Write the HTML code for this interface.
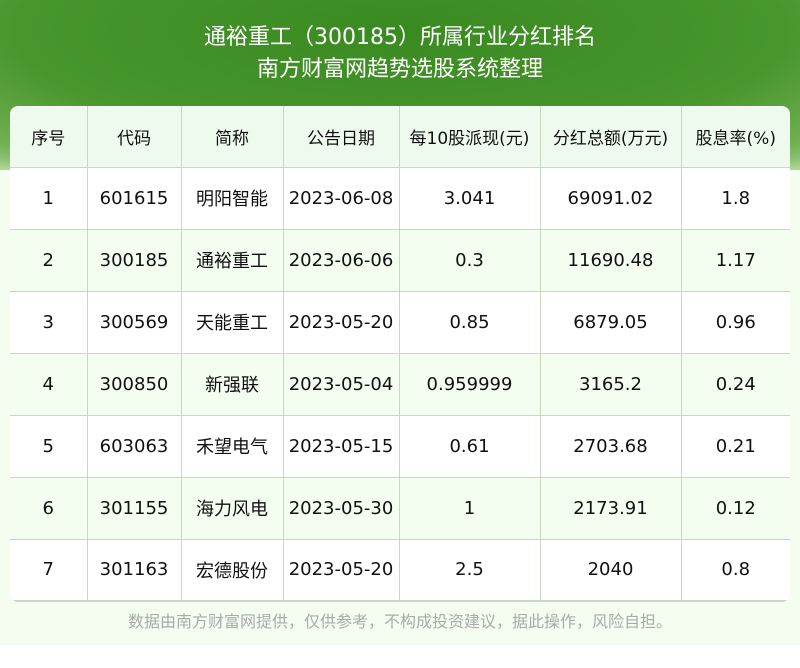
<!DOCTYPE html>
<html><head><meta charset="utf-8"><style>
*{margin:0;padding:0;box-sizing:border-box}
body{width:800px;height:668px;background:#fff;font-family:"DejaVu Sans","Noto Sans CJK SC",sans-serif;position:relative;overflow:hidden}
.bg{position:absolute;left:0;top:0;width:800px;height:645px;background:#f4fdf0}
.top{position:absolute;left:0;top:0;width:800px;height:170px;background:radial-gradient(ellipse 700px 200px at 400px 30px,#3a8a22 0%,#48962c 55%,#72b052 80%,rgba(200,235,190,0) 100%),linear-gradient(#3e8c28,#56a038 60%,#d8f2cf 95%,#f4fdf0)}
.t1,.t2{position:absolute;left:0;width:800px;text-align:center;color:#fff;font-size:22px;line-height:26px}
.t1{top:25px}.t2{top:57px}
table{position:absolute;left:10px;top:106px;width:780px;border-collapse:collapse;font-size:18px;color:#111;border-radius:8px;overflow:hidden}
td{height:62px;text-align:center;border:1px solid #c8d8c0;padding:0}
tr td:first-child{border-left:none}tr td:last-child{border-right:none}
tr:first-child td{border-top:none}tr:last-child td{border-bottom:2px solid #c8d8c0}
tr.h td{background:#eefaee;height:61px;font-size:17px}
tr.a td{background:#fff}tr.b td{background:#f3fdf0}
.f{position:absolute;top:608px;left:0;width:800px;text-align:center;color:#aaa;font-size:16px}
</style></head><body>
<div class="bg"></div><div class="top"></div>
<div class="t1">通裕重工（300185）所属行业分红排名</div>
<div class="t2">南方财富网趋势选股系统整理</div>
<table>
<colgroup><col style="width:77px"><col style="width:94px"><col style="width:102px"><col style="width:116px"><col style="width:141px"><col style="width:141px"><col style="width:109px"></colgroup>
<tr class="h"><td>序号</td><td>代码</td><td>简称</td><td>公告日期</td><td>每10股派现(元)</td><td>分红总额(万元)</td><td>股息率(%)</td></tr>
<tr class="a"><td>1</td><td>601615</td><td>明阳智能</td><td>2023-06-08</td><td>3.041</td><td>69091.02</td><td>1.8</td></tr>
<tr class="b"><td>2</td><td>300185</td><td>通裕重工</td><td>2023-06-06</td><td>0.3</td><td>11690.48</td><td>1.17</td></tr>
<tr class="a"><td>3</td><td>300569</td><td>天能重工</td><td>2023-05-20</td><td>0.85</td><td>6879.05</td><td>0.96</td></tr>
<tr class="b"><td>4</td><td>300850</td><td>新强联</td><td>2023-05-04</td><td>0.959999</td><td>3165.2</td><td>0.24</td></tr>
<tr class="a"><td>5</td><td>603063</td><td>禾望电气</td><td>2023-05-15</td><td>0.61</td><td>2703.68</td><td>0.21</td></tr>
<tr class="b"><td>6</td><td>301155</td><td>海力风电</td><td>2023-05-30</td><td>1</td><td>2173.91</td><td>0.12</td></tr>
<tr class="a"><td>7</td><td>301163</td><td>宏德股份</td><td>2023-05-20</td><td>2.5</td><td>2040</td><td>0.8</td></tr>
</table>
<div class="f">数据由南方财富网提供，仅供参考，不构成投资建议，据此操作，风险自担。</div>
</body></html>
